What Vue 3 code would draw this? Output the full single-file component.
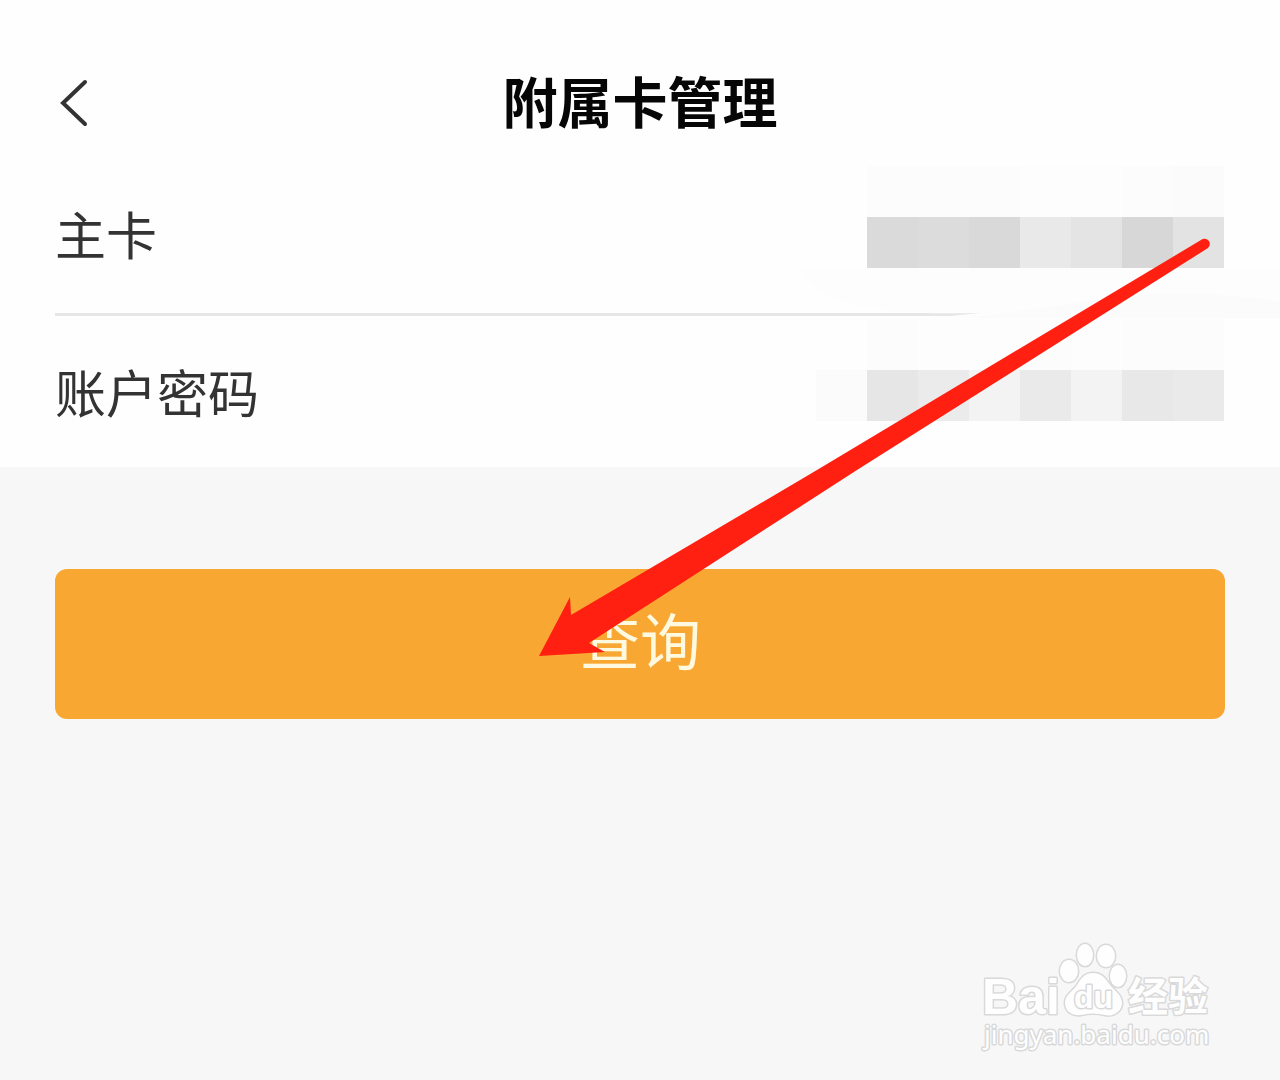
<script setup>
const rows = [
  {
    label: '主卡',
    cells: [
      '#fcfcfc', '#fcfcfc', '#fcfcfc', '#fdfdfd', '#fdfdfd', '#fcfcfc', '#fbfbfb',
      '#dadada', '#dcdcdc', '#d9d9d9', '#e9e9e9', '#e4e4e4', '#d7d7d7', '#e3e3e3',
    ],
    columns: 7,
  },
  {
    label: '账户密码',
    cells: [
      '#fefefe', '#fcfcfc', '#fdfdfd', '#fdfdfd', '#fcfcfc', '#fdfdfd', '#fcfcfc', '#fcfcfc',
      '#fbfbfb', '#e6e6e6', '#ebebeb', '#f3f3f3', '#eaeaea', '#f3f3f3', '#e8e8e8', '#eaeaea',
    ],
    columns: 8,
  },
]
</script>

<template>
  <main class="page">
    <header class="header">
      <button class="back" type="button" aria-label="返回">
        <svg width="40" height="60" viewBox="0 0 40 60" fill="none">
          <path d="M30 13 8 34l22 21" stroke="#333" stroke-width="4" stroke-linecap="round" />
        </svg>
      </button>
      <h1 class="title">附属卡管理</h1>
    </header>

    <section class="rows">
      <div v-for="row in rows" :key="row.label" class="row">
        <span class="label">{{ row.label }}</span>
        <div class="masked" :style="{ '--columns': row.columns }">
          <i v-for="(color, i) in row.cells" :key="i" :style="{ background: color }"></i>
        </div>
      </div>
    </section>

    <div class="actions">
      <button class="query" type="button">查询</button>
    </div>

    <svg class="annotation" viewBox="0 0 1280 720" aria-hidden="true">
      <path d="M803 268H1280V318H930L980 313C860 316 810 300 803 268Z" fill="#fdfdfd" />
      <path d="M970 318 1110 298Q1200 288 1280 302V318Z" fill="#fbfbfb" />
      <path
        d="M539 656 570 597 571 615 817 470 1201 240A5 5 0 0 1 1208 248L857 470 589 643 605 652Z"
        fill="#ff2012"
      />
    </svg>

    <svg class="watermark" width="240" height="120" viewBox="0 0 240 120">
      <g class="outlined">
        <ellipse cx="89" cy="31" rx="9" ry="11" />
        <ellipse cx="105" cy="15" rx="8" ry="11" />
        <ellipse cx="126" cy="16" rx="9" ry="11" />
        <ellipse cx="138" cy="36" rx="8" ry="11" />
        <path d="M113 33C104 33 101 39 97 45 92 52 85 55 85 63 85 72 93 76 101 75 109 73 117 73 125 75 134 77 142 71 142 63 142 55 135 51 130 45 125 38 122 33 113 33Z" />
        <text class="latin" x="2" y="74">Bai</text>
        <text class="du" x="94" y="68">du</text>
        <text class="cjk" x="148" y="71">经验</text>
        <text class="url" x="4" y="104">jingyan.baidu.com</text>
      </g>
    </svg>
  </main>
</template>

<style>
body {
  margin: 0;
  background: #f7f7f7;
}
</style>

<style scoped>
.page {
  position: relative;
  min-height: 100vh;
  overflow: hidden;
  background: #f7f7f7;
  font-family: "Noto Sans CJK SC", sans-serif;
}

.header {
  display: grid;
  grid-template-columns: 1fr auto 1fr;
  align-items: center;
  align-content: start;
  box-sizing: border-box;
  height: 158px;
  padding: 44px 55px 0;
  background: #fefefe;
}

.back {
  display: flex;
  justify-self: start;
  padding: 0;
  border: 0;
  background: none;
}

.title {
  margin: 0;
  color: #060606;
  font-size: 55px;
  font-weight: 700;
  line-height: 110px;
}

.rows {
  background: #fefefe;
}

.row {
  display: flex;
  justify-content: space-between;
  align-items: flex-start;
  height: 155px;
  padding-right: 56px;
  margin-left: 55px;
}

.row + .row {
  height: 151px;
  border-top: 3px solid #e6e6e6;
}

.label {
  color: #333;
  font-size: 51px;
  line-height: 150px;
}

.masked {
  display: grid;
  grid-template-columns: repeat(var(--columns), 51px);
  grid-auto-rows: 51px;
  margin-top: 8px;
}

.row + .row .masked {
  margin-top: 3px;
}

.actions {
  padding: 102px 55px 0;
}

.query {
  display: block;
  width: 100%;
  height: 150px;
  padding: 0 0 10px;
  border: 0;
  border-radius: 12px;
  background: #f8a832;
  color: #fff9e0;
  font-family: inherit;
  font-size: 61px;
  line-height: 140px;
}

.annotation {
  position: absolute;
  top: 0;
  left: 0;
  width: 100%;
  pointer-events: none;
}

.watermark {
  position: absolute;
  right: 60px;
  bottom: 20px;
}

.outlined {
  fill: #fefefe;
  stroke: #d9d9d9;
  stroke-width: 3px;
  paint-order: stroke;
  stroke-linejoin: round;
}

.latin,
.du {
  font-family: "Liberation Sans", sans-serif;
  font-weight: 700;
}

.latin {
  font-size: 50px;
}

.du {
  font-size: 32px;
}

.cjk {
  font-size: 40px;
  font-weight: 700;
}

.url {
  font-family: "Noto Sans", sans-serif;
  font-size: 26px;
}
</style>
